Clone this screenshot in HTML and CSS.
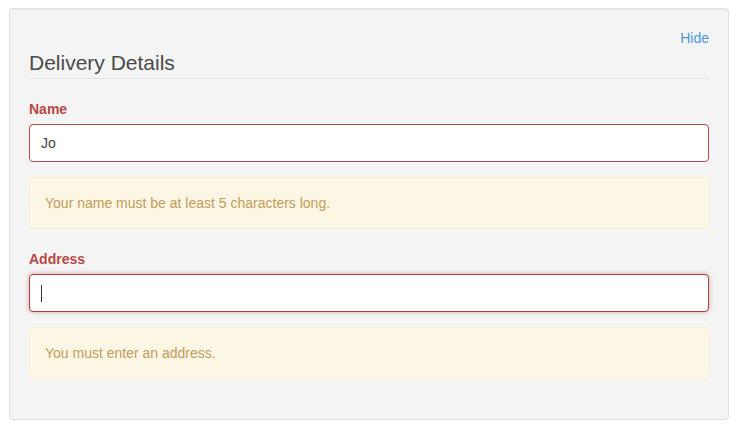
FILE: index.html
```html
<!DOCTYPE html>
<html>
<head>
<meta charset="utf-8">
<link rel="stylesheet" href="styles.css">
</head>
<body>
<div class="page">
  <form class="well">
    <div class="toolbar"><a class="hide-link" href="#">Hide</a></div>
    <div class="legend">Delivery Details</div>
    <div class="group">
      <label class="label">Name</label>
      <div class="control">Jo</div>
      <div class="alert">Your name must be at least 5 characters long.</div>
    </div>
    <div class="group">
      <label class="label">Address</label>
      <div class="control focus"><span class="caret"></span></div>
      <div class="alert">You must enter an address.</div>
    </div>
  </form>
</div>
</body>
</html>
```
FILE: styles.css
```css
html, body {
  margin: 0;
  padding: 0;
  background: #ffffff;
}
body {
  font-family: "Liberation Sans", Arial, sans-serif;
  font-size: 14px;
  line-height: 20px;
  color: #333;
}
.page {
  padding: 8px 12px 9px 9px;
}
.well {
  display: block;
  margin: 0;
  background: #f4f4f4;
  border: 1px solid #e0e0e0;
  border-radius: 4px;
  padding: 19px 19px 20px;
  box-shadow: inset 0 1px 1px rgba(0,0,0,0.04);
}
.toolbar {
  display: flex;
  justify-content: flex-end;
  height: 20px;
}
.hide-link {
  color: #4a97dd;
  text-decoration: none;
}
.legend {
  font-size: 21px;
  line-height: 30px;
  color: #4a4a4a;
  border-bottom: 1px solid #e2e2e2;
  margin-bottom: 20px;
}
.label {
  display: block;
  font-weight: bold;
  color: #b84744;
  margin-bottom: 5px;
}
.control {
  height: 36px;
  box-sizing: content-box;
  border: 1px solid #b94a48;
  border-radius: 4px;
  background: #fff;
  padding: 0 11px;
  display: flex;
  align-items: center;
  color: #444;
  font-size: 14px;
}
.control.focus {
  border-color: #a8403e;
  box-shadow: 0 0 5px rgba(196, 110, 108, 0.55);
}
.caret {
  display: block;
  width: 1px;
  height: 17px;
  background: #333;
}
.alert {
  margin-top: 15px;
  margin-bottom: 20px;
  background: #fcf7e4;
  border: 1px solid #faf0d8;
  border-radius: 4px;
  padding: 15px;
  color: #c39b5a;
}
```
